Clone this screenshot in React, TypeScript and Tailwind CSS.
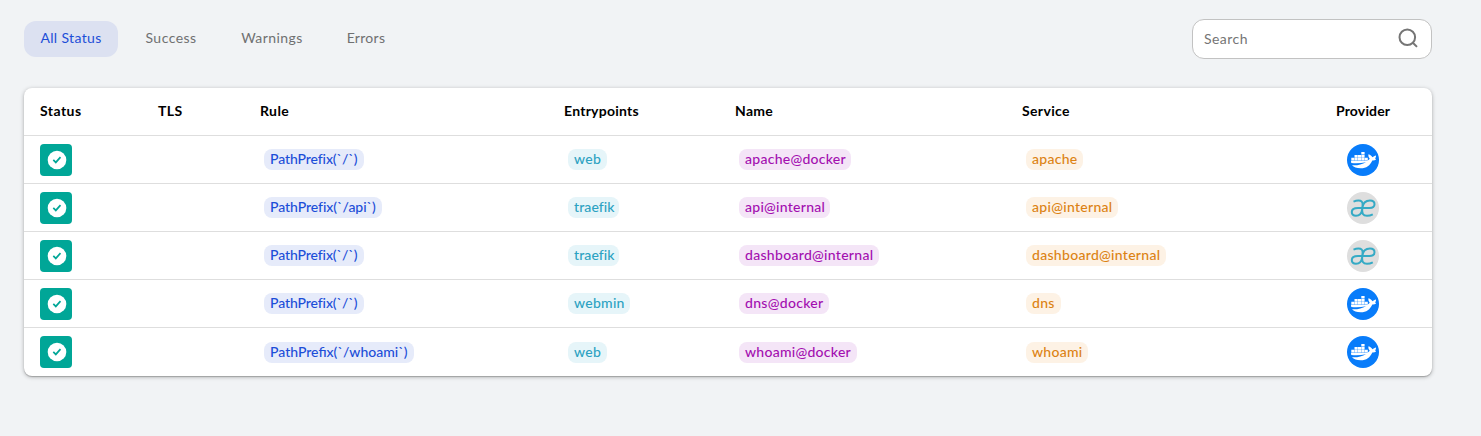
import React from 'react'

type Provider = 'docker' | 'internal'
type Label = [text: string, size: string]

const tabs: { label: string; className: string }[] = [
  { label: 'All Status', className: 'w-[94px] bg-[#dce1f1] tracking-[0.35px] text-[#1c4ed8]' },
  { label: 'Success', className: 'ml-[11px] w-[84px] tracking-[0.45px] text-[#6f7071]' },
  { label: 'Warnings', className: 'ml-[12px] w-[94px] tracking-[0.45px] text-[#6f7071]' },
  { label: 'Errors', className: 'ml-[11px] w-[72px] tracking-[0.3px] text-[#6f7071]' },
]

const rows: { rule: Label; entry: Label; name: Label; service: Label; provider: Provider }[] = [
  { rule: ['PathPrefix(`/`)', 'w-[100px] tracking-[-0.1px]'], entry: ['web', 'w-[39px] tracking-[0.3px]'], name: ['apache@docker', 'w-[112px] tracking-[0.27px]'], service: ['apache', 'w-[57px] tracking-[0.27px]'], provider: 'docker' },
  { rule: ['PathPrefix(`/api`)', 'w-[118px] tracking-[-0.05px]'], entry: ['traefik', 'w-[51px] tracking-[0.1px]'], name: ['api@internal', 'w-[91px] tracking-[0.27px]'], service: ['api@internal', 'w-[92px] tracking-[0.3px]'], provider: 'internal' },
  { rule: ['PathPrefix(`/`)', 'w-[100px] tracking-[-0.1px]'], entry: ['traefik', 'w-[51px] tracking-[0.1px]'], name: ['dashboard@internal', 'w-[140px] tracking-[0.3px]'], service: ['dashboard@internal', 'w-[140px] tracking-[0.3px]'], provider: 'internal' },
  { rule: ['PathPrefix(`/`)', 'w-[100px] tracking-[-0.1px]'], entry: ['webmin', 'w-[62px] tracking-[0.27px]'], name: ['dns@docker', 'w-[90px] tracking-[0.3px]'], service: ['dns', 'w-[35px] tracking-[0.3px]'], provider: 'docker' },
  { rule: ['PathPrefix(`/whoami`)', 'w-[150px] tracking-[0px]'], entry: ['web', 'w-[39px] tracking-[0.3px]'], name: ['whoami@docker', 'w-[118px] tracking-[0.27px]'], service: ['whoami', 'w-[62px] tracking-[0.27px]'], provider: 'docker' },
]

const columns = 'grid grid-cols-[118px_102px_304px_171px_287px_314px_1fr] items-center pl-4'

function Chip({ label, color }: { label: Label; color: string }) {
  return (
    <span className={`ml-1 flex h-[21px] items-center whitespace-nowrap rounded-lg pb-0.5 pl-1.5 font-medium ${label[1]} ${color}`}>
      {label[0]}
    </span>
  )
}

function StatusIcon() {
  return (
    <span className="flex size-8 items-center justify-center rounded bg-[#00a697]">
      <svg viewBox="0 0 20 20" className="ml-px size-5">
        <circle cx="10" cy="10" r="9.3" fill="#fff" />
        <path d="M6.300 9.900l2.500 2.500 4.700-5.300" fill="none" stroke="#00a697" strokeWidth="1.7" />
      </svg>
    </span>
  )
}

function DockerIcon() {
  return (
    <svg viewBox="0 0 32 32" className="size-8">
      <circle cx="16" cy="16" r="16" fill="#087cfa" />
      <g fill="#fff">
        <path d="M14.300 8h3.300v2.600h-3.300zM7.500 10.900h3.100v2.600h-3.100zM10.900 10.900h3.100v2.600h-3.100zM14.300 10.900h3.300v2.600h-3.300zM4.300 13.800h2.900v2.700H4.300zM7.500 13.800h3.100v2.700h-3.100zM10.900 13.800h3.100v2.700h-3.100zM14.300 13.800h3.300v2.700h-3.300zM17.900 13.800h2.900v2.700h-2.900z" />
        <path d="M4 16.800h14c2.400 0 4.200-.9 4.700-2.400-1.200-1.300-1.600-2.700-1.200-4.200 1.900.5 3.100 1.500 3.900 3 1.100-.4 2.200-1.300 3.600-1.600.2 1.100-.2 2-.9 2.700.5.500.9 1 .8 1.500-1 .5-2.300.7-3.600.6-2.300 5-5.800 7.900-11.600 7.900-4 0-7-.9-8.700-3 5.500.3 10-.8 14-3.100-5 1.100-9.800 1.500-14.700.8-.2-.7-.3-1.400-.3-2.200z" />
      </g>
    </svg>
  )
}

function InternalIcon() {
  return (
    <svg viewBox="0 0 32 32" className="size-8">
      <circle cx="16" cy="16" r="16" fill="#dedede" />
      <path
        d="M6.500 9.700C8.500 8.800 10 8.600 11.500 8.600C14.500 8.600 15.800 10 15.600 13L15.100 17.500C14.600 21.500 12.500 23.800 9 23.800C6.300 23.800 4.800 22.300 4.800 20C4.800 17.200 7 15.900 11 15.900H22.500C26 15.900 27.500 14.500 27.500 12.200C27.500 9.900 26 8.600 23 8.600C18.800 8.600 15.900 11.500 15.300 16C14.600 21.500 16 23.800 20 23.800C22.300 23.800 24 23.300 25.800 22.400"
        fill="none"
        stroke="#35aac5"
        strokeWidth="2"
      />
    </svg>
  )
}

export default function App() {
  return (
    <main className="min-h-[436px] bg-[#f1f3f5] pl-6 pr-[49px] pt-[19px] font-[Lato,sans-serif] text-[14px]">
      <div className="flex h-10 items-start justify-between">
        <nav className="flex pt-0.5">
          {tabs.map((tab) => (
            <button key={tab.label} className={`flex h-9 items-center justify-center whitespace-nowrap rounded-xl pb-[3px] ${tab.className}`}>
              <span>{tab.label}</span>
            </button>
          ))}
        </nav>
        <label className="flex h-10 w-60 items-center justify-between rounded-xl border border-[#c2c2c2] bg-white pl-[11px] pr-[11px]">
          <span className="pb-0.5 tracking-[0.45px] text-[#757575]">Search</span>
          <svg viewBox="0 0 24 24" className="-mt-0.5 size-6" fill="none" stroke="#757575" strokeWidth="2">
            <circle cx="11.300" cy="11.200" r="7.800" />
            <path d="M16.800 16.700l4.200 4.200" />
          </svg>
        </label>
      </div>

      <section className="mt-[29px] h-72 rounded-lg bg-white shadow-[0_1px_4px_rgba(0,0,0,0.28),0_1px_1px_rgba(0,0,0,0.2)]">
        <header className={`h-12 border-b border-[#dedede] pb-0.5 font-bold text-black ${columns}`}>
          <span className="tracking-[0.45px]">Status</span>
          <span className="tracking-[0.4px]">TLS</span>
          <span className="tracking-[0.4px]">Rule</span>
          <span className="tracking-[0.25px]">Entrypoints</span>
          <span className="tracking-[0.3px]">Name</span>
          <span className="tracking-[0.35px]">Service</span>
          <span className="tracking-[0.15px]">Provider</span>
        </header>
        {rows.map((row, index) => (
          <div key={index} className={`h-12 border-b border-[#dedede] last:border-b-0 ${columns}`}>
            <StatusIcon />
            <span />
            <Chip label={row.rule} color="bg-[#e6ebfa] text-[#1c4ed8]" />
            <Chip label={row.entry} color="bg-[#e6f5f9] text-[#2ca2c2]" />
            <Chip label={row.name} color="bg-[#f4e5f7] text-[#a30fb0]" />
            <Chip label={row.service} color="bg-[#fdf2e5] text-[#dc8213]" />
            <span className="pl-[11px]">{row.provider === 'docker' ? <DockerIcon /> : <InternalIcon />}</span>
          </div>
        ))}
      </section>
    </main>
  )
}
